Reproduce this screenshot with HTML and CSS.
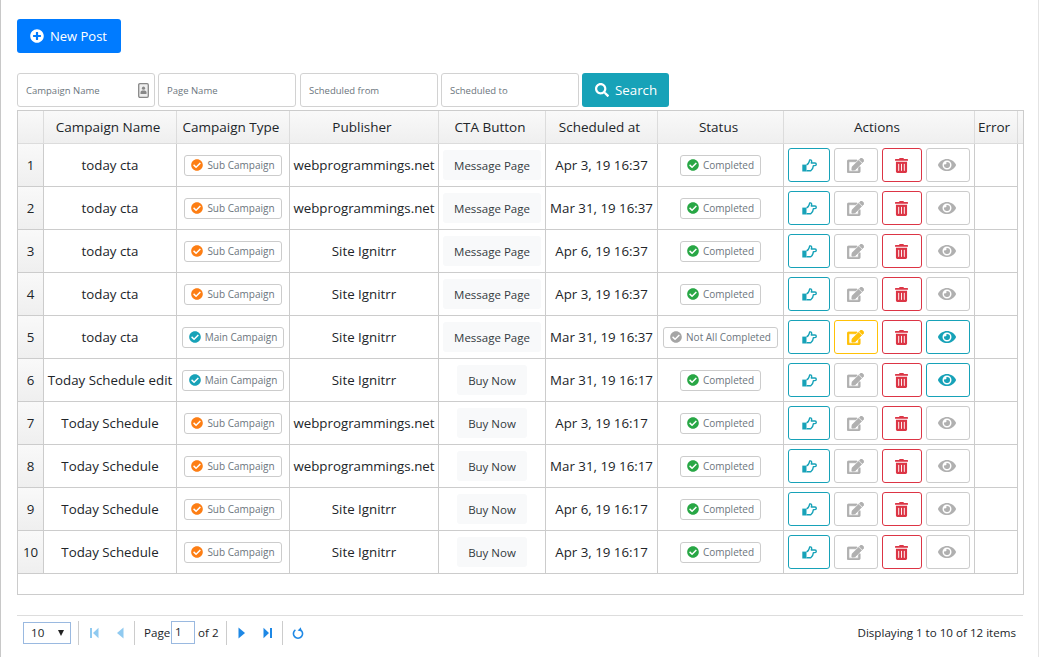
FILE: index.html
```html
<!DOCTYPE html>
<html lang="en">
<head>
  <meta charset="UTF-8" />
  <title>Posts</title>
  <link rel="stylesheet" href="styles.css">
</head>
<body>
  <svg class="sprites" width="0" height="0">
    <symbol id="i-plus" viewBox="0 0 512 512"><path d="M256 8C119 8 8 119 8 256s111 248 248 248 248-111 248-248S393 8 256 8zm144 276c0 6.6-5.4 12-12 12h-92v92c0 6.6-5.4 12-12 12h-56c-6.6 0-12-5.4-12-12v-92h-92c-6.6 0-12-5.4-12-12v-56c0-6.6 5.4-12 12-12h92v-92c0-6.6 5.4-12 12-12h56c6.6 0 12 5.4 12 12v92h92c6.6 0 12 5.4 12 12v56z"/></symbol>
    <symbol id="i-search" viewBox="0 0 512 512"><path d="M505 442.7L405.3 343c-4.5-4.5-10.6-7-17-7H372c27.6-35.3 44-79.7 44-128C416 93.1 322.9 0 208 0S0 93.1 0 208s93.1 208 208 208c48.3 0 92.7-16.4 128-44v16.3c0 6.4 2.5 12.5 7 17l99.7 99.7c9.4 9.4 24.6 9.4 33.9 0l28.3-28.3c9.4-9.4 9.4-24.6.1-34zM208 336c-70.7 0-128-57.2-128-128 0-70.7 57.2-128 128-128 70.7 0 128 57.2 128 128 0 70.7-57.2 128-128 128z"/></symbol>
    <symbol id="i-check" viewBox="0 0 512 512"><path d="M504 256c0 136.967-111.033 248-248 248S8 392.967 8 256 119.033 8 256 8s248 111.033 248 248zM227.314 387.314l184-184c6.248-6.248 6.248-16.379 0-22.627l-22.627-22.627c-6.248-6.249-16.379-6.249-22.628 0L216 308.118l-70.059-70.059c-6.248-6.248-16.379-6.248-22.628 0l-22.627 22.627c-6.248 6.248-6.248 16.379 0 22.627l104 104c6.249 6.249 16.379 6.249 22.628.001z"/></symbol>
    <symbol id="i-edit" viewBox="0 0 576 512"><path stroke="currentColor" stroke-width="22" d="M402.6 83.2l90.2 90.2c3.8 3.8 3.8 10 0 13.8L274.4 405.6l-92.8 10.3c-12.4 1.4-22.9-9.1-21.5-21.5l10.3-92.8L388.8 83.2c3.8-3.8 10-3.8 13.8 0zm162-22.9l-48.8-48.8c-15.2-15.2-39.9-15.2-55.2 0l-35.4 35.4c-3.8 3.8-3.8 10 0 13.8l90.2 90.2c3.8 3.8 10 3.8 13.8 0l35.4-35.4c15.2-15.3 15.2-40 0-55.2zM384 346.2V448H64V128h229.8c3.2 0 6.2-1.3 8.5-3.5l40-40c7.6-7.6 2.2-20.5-8.5-20.5H48C21.5 64 0 85.5 0 112v352c0 26.5 21.5 48 48 48h352c26.5 0 48-21.5 48-48V306.2c0-10.7-12.9-16-20.5-8.5l-40 40c-2.2 2.3-3.5 5.3-3.5 8.5z"/></symbol>
    <symbol id="i-trash" viewBox="0 0 448 512"><path d="M32 464a48 48 0 0 0 48 48h288a48 48 0 0 0 48-48V128H32zm272-256a16 16 0 0 1 32 0v224a16 16 0 0 1-32 0zm-96 0a16 16 0 0 1 32 0v224a16 16 0 0 1-32 0zm-96 0a16 16 0 0 1 32 0v224a16 16 0 0 1-32 0zM432 32H312l-9.4-18.7A24 24 0 0 0 281.1 0H166.8a23.72 23.72 0 0 0-21.4 13.3L136 32H16A16 16 0 0 0 0 48v32a16 16 0 0 0 16 16h416a16 16 0 0 0 16-16V48a16 16 0 0 0-16-16z"/></symbol>
    <symbol id="i-eye" viewBox="0 0 576 512"><path d="M572.52 241.4C518.29 135.59 410.93 64 288 64S57.68 135.64 3.48 241.41a32.35 32.35 0 0 0 0 29.19C57.71 376.41 165.07 448 288 448s230.32-71.64 284.52-177.41a32.35 32.35 0 0 0 0-29.19zM288 400a144 144 0 1 1 144-144 143.93 143.93 0 0 1-144 144zm0-240a95.31 95.31 0 0 0-25.31 3.79 47.85 47.85 0 0 1-66.9 66.9A95.78 95.78 0 1 0 288 160z"/></symbol>
    <symbol id="i-hand" viewBox="0 0 15 13"><path d="M.3 5.6h4.2v6.9H.3z"/><path fill="none" stroke="currentColor" stroke-width="1.4" stroke-linejoin="round" d="M4.5 5.7C6 5.4 7 3.8 7.7 1c1.5-.5 2.5.7 1.6 3h3.7c1.7 0 1.7 2.6 0 2.6h-1.6c-.2 2-1 4-2.6 5.2H4.5"/></symbol>
    <symbol id="i-first" viewBox="0 0 12 12"><path d="M2 1h2v10H2zM10.500 .7v10.600L5 6z"/></symbol>
    <symbol id="i-prev" viewBox="0 0 12 12"><path d="M9.500 .5v11L3 6z"/></symbol>
    <symbol id="i-next" viewBox="0 0 12 12"><path d="M2.500 .5v11L9 6z"/></symbol>
    <symbol id="i-last" viewBox="0 0 12 12"><path d="M8 1h2v10H8zM1.500 .7v10.600L7 6z"/></symbol>
    <symbol id="i-reload" viewBox="0 0 12 12"><path fill="none" stroke="currentColor" stroke-width="1.6" d="M3.400 2.800a4.600 4.600 0 1 0 5.200 0"/><path d="M8.900 .3 9.400 4.600 5.600 3.400z"/></symbol>
  </svg>

  <div class="page">
    <a class="btn-new"><svg class="ico"><use href="#i-plus"/></svg>New Post</a>

    <div class="filters">
      <div class="field">
        <span>Campaign Name</span>
        <svg class="contact" viewBox="0 0 11 15"><rect x=".7" y=".7" width="9.6" height="13.6" rx="1.2" fill="#eee" stroke="#888" stroke-width="1.3"/><circle cx="5.500" cy="5.200" r="1.600" fill="#888"/><path d="M2.500 11V9.400c0-1.200 1-1.800 3-1.800s3 .6 3 1.800V11z" fill="#888"/></svg>
      </div>
      <div class="field"><span>Page Name</span></div>
      <div class="field gap-l"><span>Scheduled from</span></div>
      <div class="field"><span>Scheduled to</span></div>
      <a class="btn-search"><svg class="ico"><use href="#i-search"/></svg>Search</a>
    </div>

    <div class="grid">
      <table>
        <colgroup>
          <col class="c-num"><col class="c-name"><col class="c-type"><col class="c-pub"><col class="c-cta"><col class="c-date"><col class="c-status"><col class="c-act"><col class="c-err"><col class="c-fill">
        </colgroup>
        <thead>
          <tr>
            <th></th><th>Campaign Name</th><th>Campaign Type</th><th>Publisher</th><th>CTA Button</th><th>Scheduled at</th><th>Status</th><th>Actions</th><th>Error</th><th class="fill"></th>
          </tr>
        </thead>
        <tbody>
          <tr>
            <td class="num">1</td><td>today cta</td>
            <td><span class="tag"><svg class="orange"><use href="#i-check"/></svg>Sub Campaign</span></td>
            <td>webprogrammings.net</td><td><span class="cta wide">Message Page</span></td><td>Apr 3, 19 16:37</td>
            <td><span class="tag"><svg class="green"><use href="#i-check"/></svg>Completed</span></td>
            <td><div class="acts"><a class="act a-hand"><svg><use href="#i-hand"/></svg></a><a class="act a-edit"><svg><use href="#i-edit"/></svg></a><a class="act a-del"><svg><use href="#i-trash"/></svg></a><a class="act a-eye"><svg><use href="#i-eye"/></svg></a></div></td>
            <td></td><td class="fill"></td>
          </tr>
          <tr>
            <td class="num">2</td><td>today cta</td>
            <td><span class="tag"><svg class="orange"><use href="#i-check"/></svg>Sub Campaign</span></td>
            <td>webprogrammings.net</td><td><span class="cta wide">Message Page</span></td><td>Mar 31, 19 16:37</td>
            <td><span class="tag"><svg class="green"><use href="#i-check"/></svg>Completed</span></td>
            <td><div class="acts"><a class="act a-hand"><svg><use href="#i-hand"/></svg></a><a class="act a-edit"><svg><use href="#i-edit"/></svg></a><a class="act a-del"><svg><use href="#i-trash"/></svg></a><a class="act a-eye"><svg><use href="#i-eye"/></svg></a></div></td>
            <td></td><td class="fill"></td>
          </tr>
          <tr>
            <td class="num">3</td><td>today cta</td>
            <td><span class="tag"><svg class="orange"><use href="#i-check"/></svg>Sub Campaign</span></td>
            <td>Site Ignitrr</td><td><span class="cta wide">Message Page</span></td><td>Apr 6, 19 16:37</td>
            <td><span class="tag"><svg class="green"><use href="#i-check"/></svg>Completed</span></td>
            <td><div class="acts"><a class="act a-hand"><svg><use href="#i-hand"/></svg></a><a class="act a-edit"><svg><use href="#i-edit"/></svg></a><a class="act a-del"><svg><use href="#i-trash"/></svg></a><a class="act a-eye"><svg><use href="#i-eye"/></svg></a></div></td>
            <td></td><td class="fill"></td>
          </tr>
          <tr>
            <td class="num">4</td><td>today cta</td>
            <td><span class="tag"><svg class="orange"><use href="#i-check"/></svg>Sub Campaign</span></td>
            <td>Site Ignitrr</td><td><span class="cta wide">Message Page</span></td><td>Apr 3, 19 16:37</td>
            <td><span class="tag"><svg class="green"><use href="#i-check"/></svg>Completed</span></td>
            <td><div class="acts"><a class="act a-hand"><svg><use href="#i-hand"/></svg></a><a class="act a-edit"><svg><use href="#i-edit"/></svg></a><a class="act a-del"><svg><use href="#i-trash"/></svg></a><a class="act a-eye"><svg><use href="#i-eye"/></svg></a></div></td>
            <td></td><td class="fill"></td>
          </tr>
          <tr>
            <td class="num">5</td><td>today cta</td>
            <td><span class="tag"><svg class="teal"><use href="#i-check"/></svg>Main Campaign</span></td>
            <td>Site Ignitrr</td><td><span class="cta wide">Message Page</span></td><td>Mar 31, 19 16:37</td>
            <td><span class="tag"><svg class="grey"><use href="#i-check"/></svg>Not All Completed</span></td>
            <td><div class="acts"><a class="act a-hand"><svg><use href="#i-hand"/></svg></a><a class="act a-edit on"><svg><use href="#i-edit"/></svg></a><a class="act a-del"><svg><use href="#i-trash"/></svg></a><a class="act a-eye on"><svg><use href="#i-eye"/></svg></a></div></td>
            <td></td><td class="fill"></td>
          </tr>
          <tr>
            <td class="num">6</td><td>Today Schedule edit</td>
            <td><span class="tag"><svg class="teal"><use href="#i-check"/></svg>Main Campaign</span></td>
            <td>Site Ignitrr</td><td><span class="cta">Buy Now</span></td><td>Mar 31, 19 16:17</td>
            <td><span class="tag"><svg class="green"><use href="#i-check"/></svg>Completed</span></td>
            <td><div class="acts"><a class="act a-hand"><svg><use href="#i-hand"/></svg></a><a class="act a-edit"><svg><use href="#i-edit"/></svg></a><a class="act a-del"><svg><use href="#i-trash"/></svg></a><a class="act a-eye on"><svg><use href="#i-eye"/></svg></a></div></td>
            <td></td><td class="fill"></td>
          </tr>
          <tr>
            <td class="num">7</td><td>Today Schedule</td>
            <td><span class="tag"><svg class="orange"><use href="#i-check"/></svg>Sub Campaign</span></td>
            <td>webprogrammings.net</td><td><span class="cta">Buy Now</span></td><td>Apr 3, 19 16:17</td>
            <td><span class="tag"><svg class="green"><use href="#i-check"/></svg>Completed</span></td>
            <td><div class="acts"><a class="act a-hand"><svg><use href="#i-hand"/></svg></a><a class="act a-edit"><svg><use href="#i-edit"/></svg></a><a class="act a-del"><svg><use href="#i-trash"/></svg></a><a class="act a-eye"><svg><use href="#i-eye"/></svg></a></div></td>
            <td></td><td class="fill"></td>
          </tr>
          <tr>
            <td class="num">8</td><td>Today Schedule</td>
            <td><span class="tag"><svg class="orange"><use href="#i-check"/></svg>Sub Campaign</span></td>
            <td>webprogrammings.net</td><td><span class="cta">Buy Now</span></td><td>Mar 31, 19 16:17</td>
            <td><span class="tag"><svg class="green"><use href="#i-check"/></svg>Completed</span></td>
            <td><div class="acts"><a class="act a-hand"><svg><use href="#i-hand"/></svg></a><a class="act a-edit"><svg><use href="#i-edit"/></svg></a><a class="act a-del"><svg><use href="#i-trash"/></svg></a><a class="act a-eye"><svg><use href="#i-eye"/></svg></a></div></td>
            <td></td><td class="fill"></td>
          </tr>
          <tr>
            <td class="num">9</td><td>Today Schedule</td>
            <td><span class="tag"><svg class="orange"><use href="#i-check"/></svg>Sub Campaign</span></td>
            <td>Site Ignitrr</td><td><span class="cta">Buy Now</span></td><td>Apr 6, 19 16:17</td>
            <td><span class="tag"><svg class="green"><use href="#i-check"/></svg>Completed</span></td>
            <td><div class="acts"><a class="act a-hand"><svg><use href="#i-hand"/></svg></a><a class="act a-edit"><svg><use href="#i-edit"/></svg></a><a class="act a-del"><svg><use href="#i-trash"/></svg></a><a class="act a-eye"><svg><use href="#i-eye"/></svg></a></div></td>
            <td></td><td class="fill"></td>
          </tr>
          <tr>
            <td class="num">10</td><td>Today Schedule</td>
            <td><span class="tag"><svg class="orange"><use href="#i-check"/></svg>Sub Campaign</span></td>
            <td>Site Ignitrr</td><td><span class="cta">Buy Now</span></td><td>Apr 3, 19 16:17</td>
            <td><span class="tag"><svg class="green"><use href="#i-check"/></svg>Completed</span></td>
            <td><div class="acts"><a class="act a-hand"><svg><use href="#i-hand"/></svg></a><a class="act a-edit"><svg><use href="#i-edit"/></svg></a><a class="act a-del"><svg><use href="#i-trash"/></svg></a><a class="act a-eye"><svg><use href="#i-eye"/></svg></a></div></td>
            <td></td><td class="fill"></td>
          </tr>
        </tbody>
      </table>
    </div>

    <div class="pager">
      <div class="pg-size"><span>10</span><i class="caret"></i></div>
      <b class="sep sep-first"></b>
      <svg class="pg-ico off"><use href="#i-first"/></svg>
      <svg class="pg-ico off"><use href="#i-prev"/></svg>
      <b class="sep"></b>
      <span class="pg-label">Page</span>
      <span class="pg-input">1</span>
      <span class="pg-of">of 2</span>
      <b class="sep"></b>
      <svg class="pg-ico"><use href="#i-next"/></svg>
      <svg class="pg-ico"><use href="#i-last"/></svg>
      <b class="sep"></b>
      <svg class="pg-ico"><use href="#i-reload"/></svg>
      <span class="pg-info">Displaying 1 to 10 of 12 items</span>
    </div>
  </div>
</body>
</html>
```

FILE: styles.css
```css
* {
  box-sizing: border-box;
}
html, body {
  margin: 0;
  height: 100%;
}
body {
  font-family: "Open Sans", "Noto Sans", sans-serif;
  font-size: 13.3px;
  color: #212529;
  background: #fff;
  overflow: hidden;
}
.sprites {
  display: none;
}
.page {
  height: 100%;
  padding: 19px 14px 0 16px;
  border-left: 1px solid #c8c8c8;
  border-right: 1px solid #e4e4e4;
}
.ico {
  width: 14px;
  height: 14px;
  fill: currentColor;
  flex: none;
}

/* top buttons */
.btn-new {
  display: flex;
  align-items: center;
  gap: 6px;
  width: 104px;
  height: 34px;
  padding-left: 13px;
  background: #007bff;
  color: #fff;
  border-radius: 3px;
  font-size: 13px;
}

/* filters */
.filters {
  display: flex;
  gap: 3px;
  margin-top: 20px;
}
.field {
  display: flex;
  align-items: center;
  justify-content: space-between;
  width: 138px;
  height: 34px;
  padding: 0 5px 0 8px;
  border: 1px solid #d2d2d2;
  border-radius: 3px;
  font-size: 9.5px;
  color: #6c757d;
}
.gap-l {
  margin-left: 1px;
}
.contact {
  width: 11px;
  height: 15px;
}
.btn-search {
  display: flex;
  align-items: center;
  gap: 6px;
  width: 87px;
  height: 34px;
  padding-left: 13px;
  background: #17a2b8;
  color: #fff;
  border-radius: 3px;
  font-size: 13.3px;
}

/* grid */
.grid {
  height: 485px;
  margin-top: 3px;
  width: 1007px;
  border: 1px solid #ccc;
}
table {
  table-layout: fixed;
  width: 1005px;
  border-collapse: separate;
  border-spacing: 0;
}
.c-num { width: 26px; }
.c-name { width: 133px; }
.c-type { width: 113px; }
.c-pub { width: 149px; }
.c-cta { width: 107px; }
.c-date { width: 112px; }
.c-status { width: 126px; }
.c-act { width: 191px; }
.c-err { width: 43px; }
.c-fill { width: 5px; }
th, td {
  padding: 0;
  text-align: center;
  white-space: nowrap;
  border-right: 1px solid #ccc;
  border-bottom: 1px solid #ccc;
}
th {
  height: 33px;
  padding-right: 4px;
  font-size: 13.5px;
  font-weight: 400;
  background: linear-gradient(#f9f9f9, #efefef);
  border-color: #dcdcdc;
}
td {
  height: 43px;
}
td.num {
  background: linear-gradient(#f9f9f9, #efefef);
}
th.fill {
  padding: 0;
  border-right: 0;
}
td.fill {
  border: 0;
}

/* cell content */
.tag {
  display: inline-flex;
  align-items: center;
  gap: 4px;
  height: 21px;
  padding: 0 6px;
  border: 1px solid #ccc;
  border-radius: 3px;
  font-size: 10px;
  color: #6c757d;
  vertical-align: middle;
}
.tag svg {
  width: 12px;
  height: 12px;
}
.orange { fill: #fd7e14; }
.green { fill: #28a745; }
.teal { fill: #17a2b8; }
.grey { fill: #a5a5a5; }
.cta {
  display: inline-flex;
  align-items: center;
  justify-content: center;
  width: 70px;
  height: 30px;
  background: #f8f9fa;
  border-radius: 3px;
  font-size: 11.5px;
  color: #343a40;
  vertical-align: middle;
}
.cta.wide {
  width: 98px;
}
.acts {
  display: flex;
  gap: 4px;
  padding-left: 4px;
}
.act {
  display: flex;
  align-items: center;
  justify-content: center;
  height: 34px;
  border: 1px solid #ccc;
  border-radius: 3px;
}
.act svg {
  fill: currentColor;
}
.a-hand {
  width: 42px;
  color: #17a2b8;
  border-color: #17a2b8;
}
.a-hand svg {
  width: 15px;
  height: 13px;
}
.a-edit {
  width: 44px;
  padding-right: 2px;
  color: #b0b0b0;
}
.a-edit svg {
  width: 17px;
  height: 15px;
}
.a-edit.on {
  color: #ffc107;
  border-color: #ffc107;
}
.a-del {
  width: 40px;
  padding-right: 2px;
  color: #dc3545;
  border-color: #dc3545;
}
.a-del svg {
  width: 13px;
  height: 15px;
}
.a-eye {
  width: 44px;
  padding-right: 3px;
  color: #b0b0b0;
}
.a-eye svg {
  width: 18px;
  height: 16px;
}
.a-eye.on {
  color: #17a2b8;
  border-color: #17a2b8;
}

/* pager */
.pager {
  display: flex;
  align-items: center;
  width: 1006px;
  height: 33px;
  margin-top: 20px;
  padding: 1px 7px 0 6px;
  border-top: 1px solid #ddd;
  font-size: 11.6px;
}
.pg-size {
  display: flex;
  align-items: center;
  justify-content: space-between;
  width: 48px;
  height: 22px;
  padding: 0 6px 0 7px;
  border: 1px solid #9ab9e0;
}
.caret {
  width: 0;
  height: 0;
  border-left: 3.5px solid transparent;
  border-right: 3.5px solid transparent;
  border-top: 6px solid #222;
}
.sep {
  width: 1px;
  height: 24px;
  margin: 0 2px 0 1px;
  background: #ccc;
}
.sep-first {
  margin-left: 7px;
}
.pg-ico {
  width: 12px;
  height: 12px;
  margin: 0 7px;
  fill: #1e88e5;
  color: #1e88e5;
}
.pg-ico.off {
  fill: #90caf0;
}
.pg-label {
  width: 27px;
  margin-left: 7px;
}
.pg-input {
  width: 24px;
  height: 23px;
  padding: 2px 0 0 3px;
  border: 1px solid #9ab9e0;
}
.pg-of {
  width: 27px;
  margin-left: 3px;
}
.pg-info {
  margin-left: auto;
}
```
